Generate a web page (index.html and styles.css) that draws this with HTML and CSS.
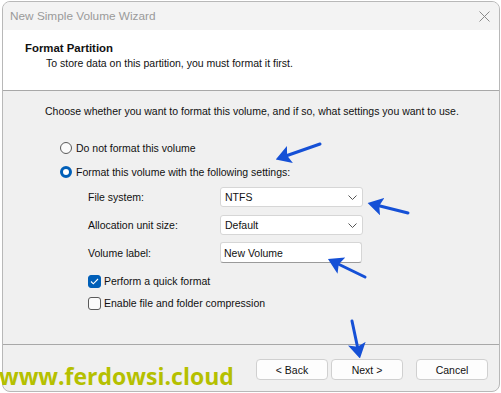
FILE: index.html
```html
<!DOCTYPE html>
<html lang="en">
<head>
    <meta charset="UTF-8">
    <title>New Simple Volume Wizard</title>
    <link rel="stylesheet" href="styles.css">
</head>
<body>

    <div class="window">
        <div class="titlebar">
            <span class="title">New Simple Volume Wizard</span>
            <svg class="close" width="11" height="11" viewBox="0 0 11 11">
                <path d="M0.5 0.5 L10.5 10.5 M10.5 0.5 L0.5 10.5" stroke="#8a8a8a" stroke-width="1" fill="none"/>
            </svg>
        </div>

        <div class="header">
            <h1>Format Partition</h1>
            <p>To store data on this partition, you must format it first.</p>
        </div>

        <div class="content">
            <p class="intro">Choose whether you want to format this volume, and if so, what settings you want to use.</p>

            <div class="choice"><span class="radio"></span>Do not format this volume</div>
            <div class="choice"><span class="radio on"></span>Format this volume with the following settings:</div>

            <div class="settings">
                <div class="row">
                    <label>File system:</label>
                    <div class="combo">NTFS
                        <svg class="chevron" width="9" height="5" viewBox="0 0 9 5"><path d="M0.5 0.5 L4.5 4.5 L8.5 0.5" stroke="#555" fill="none"/></svg>
                    </div>
                </div>
                <div class="row alloc">
                    <label>Allocation unit size:</label>
                    <div class="combo">Default
                        <svg class="chevron" width="9" height="5" viewBox="0 0 9 5"><path d="M0.5 0.5 L4.5 4.5 L8.5 0.5" stroke="#555" fill="none"/></svg>
                    </div>
                </div>
                <div class="row vol">
                    <label>Volume label:</label>
                    <div class="textbox">New Volume</div>
                </div>
            </div>

            <div class="check first">
                <span class="box on">
                    <svg width="9" height="7" viewBox="0 0 9 7"><path d="M1 3.5 L3.3 5.8 L8 1" stroke="#fff" stroke-width="1.1" fill="none"/></svg>
                </span>Perform a quick format
            </div>
            <div class="check"><span class="box"></span>Enable file and folder compression</div>
        </div>

        <div class="footer">
            <button>&lt; Back</button>
            <button>Next &gt;</button>
            <button class="cancel">Cancel</button>
        </div>
    </div>

    <div class="watermark">www.ferdowsi.cloud</div>

    <svg class="arrows" width="501" height="393" viewBox="0 0 501 393">
        <defs>
            <marker id="head" markerWidth="5" markerHeight="6" refX="3.5" refY="3" orient="auto" markerUnits="strokeWidth">
                <path d="M0 0 L5 3 L0 6 L1 3 z" fill="#1550d6"/>
            </marker>
        </defs>
        <g stroke="#1550d6" stroke-width="3" fill="none" stroke-linecap="round" marker-end="url(#head)">
            <line x1="320" y1="144" x2="280" y2="158"/>
            <line x1="408" y1="213" x2="372" y2="204"/>
            <line x1="365" y1="277" x2="332" y2="261"/>
            <line x1="352" y1="321" x2="359" y2="354"/>
        </g>
    </svg>

</body>
</html>
```

FILE: styles.css
```css
body {
    margin: 0;
    background-color: #fff;
    font-family: 'Liberation Sans', Arial, sans-serif;
    font-size: 10.5px;
    color: #111;
    width: 501px;
    height: 393px;
    overflow: hidden;
    position: relative;
}

.window {
    box-sizing: border-box;
    width: 498px;
    height: 391px;
    margin: 1px 0 0 2px;
    border: 1px solid #b8b8b8;
    border-radius: 8px;
    overflow: hidden;
    background-color: #f0f0f0;
    display: flex;
    flex-direction: column;
}

.titlebar {
    height: 28px;
    flex-shrink: 0;
    background-color: #f3f3f3;
    display: flex;
    align-items: center;
    justify-content: space-between;
    padding: 0 9px 0 7px;
}

.title {
    font-size: 11.8px;
    color: #9a9a9a;
}

.header {
    box-sizing: border-box;
    height: 61px;
    flex-shrink: 0;
    background-color: #fff;
    border-bottom: 1px solid #a8a8a8;
    padding: 11px 0 0 22px;
}

.header h1 {
    margin: 0;
    font-size: 11.4px;
    font-weight: bold;
    line-height: 14px;
}

.header p {
    margin: 1px 0 0 21px;
    line-height: 14px;
}

.content {
    flex: 1;
    padding-top: 13px;
}

.intro {
    margin: 0 0 0 42px;
    line-height: 14px;
}

.choice {
    display: flex;
    align-items: center;
    height: 18px;
    margin: 21px 0 0 57px;
}

.choice + .choice {
    margin-top: 6px;
}

.radio {
    box-sizing: border-box;
    width: 12px;
    height: 12px;
    border: 1px solid #5a5a5a;
    border-radius: 50%;
    background-color: #fafafa;
    margin-right: 4px;
}

.radio.on {
    border: 3.5px solid #005fb8;
    background-color: #fff;
}

.settings {
    margin: 6px 0 0 85px;
}

.row {
    display: grid;
    grid-template-columns: 132px 143px;
    align-items: center;
}

.row.alloc {
    margin-top: 8px;
}

.row.vol {
    margin-top: 7px;
}

.combo, .textbox {
    box-sizing: border-box;
    height: 20px;
    background-color: #fff;
    border: 1px solid #d6d6d6;
    border-radius: 3px;
    padding: 0 0 0 4px;
    display: flex;
    align-items: center;
    justify-content: space-between;
}

.textbox {
    height: 21px;
    width: 142px;
    border-bottom-color: #9a9a9a;
    padding-left: 3px;
}

.chevron {
    margin-right: 5px;
}

.check {
    display: flex;
    align-items: center;
    height: 16px;
    margin: 6px 0 0 85px;
}

.check.first {
    margin-top: 10px;
}

.box {
    box-sizing: border-box;
    width: 13px;
    height: 13px;
    border: 1px solid #5a5a5a;
    border-radius: 3px;
    background-color: #fafafa;
    margin-right: 3px;
    display: flex;
    align-items: center;
    justify-content: center;
}

.box.on {
    background-color: #005fb8;
    border-color: #005fb8;
}

.footer {
    box-sizing: border-box;
    height: 47px;
    flex-shrink: 0;
    border-top: 1px solid #a8a8a8;
    display: flex;
    justify-content: flex-end;
    align-items: flex-start;
    padding: 14px 11px 0 0;
}

button {
    width: 72px;
    height: 21px;
    margin-left: 3px;
    background-color: #fdfdfd;
    border: 1px solid #d0d0d0;
    border-radius: 4px;
    font-family: 'Liberation Sans', Arial, sans-serif;
    font-size: 10.5px;
    color: #111;
    padding: 0;
}

button.cancel {
    margin-left: 13px;
}

.watermark {
    position: absolute;
    left: -1px;
    top: 360px;
    font-family: 'Open Sans', sans-serif;
    font-weight: bold;
    font-size: 23px;
    color: #b5c000;
}

.arrows {
    position: absolute;
    left: 0;
    top: 0;
}
```
